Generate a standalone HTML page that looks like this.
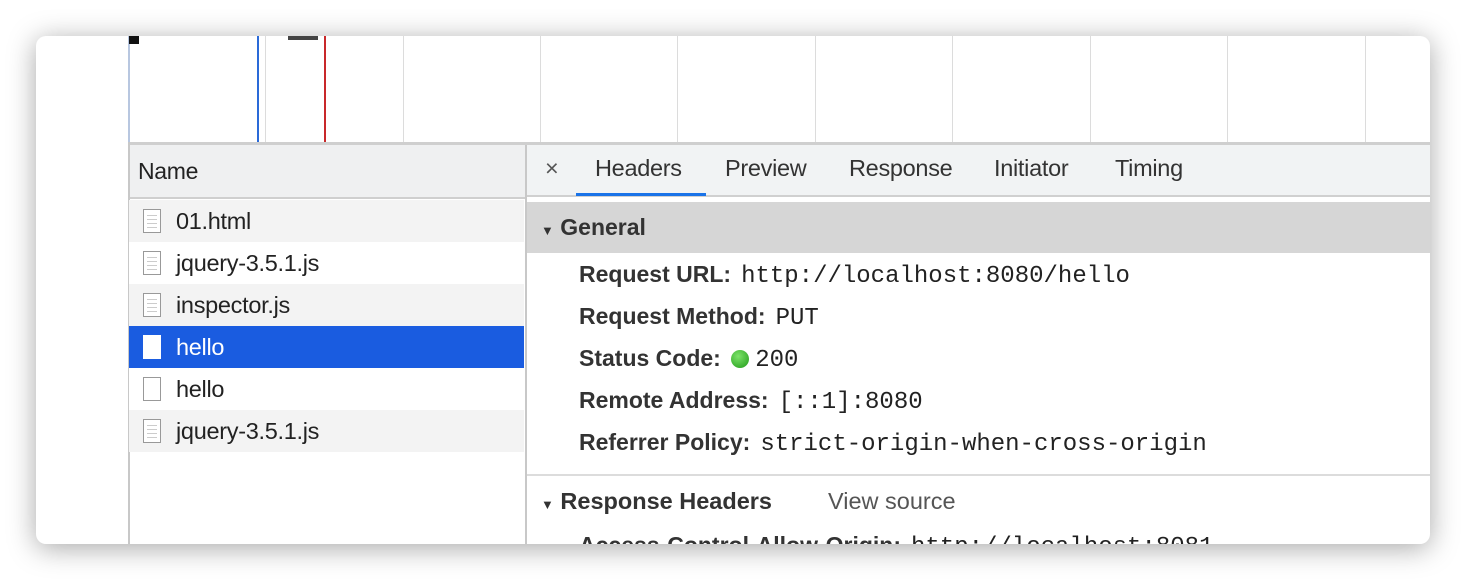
<!DOCTYPE html><html><head><style>
body{margin:0;width:1466px;height:580px;background:#fff;position:relative;overflow:hidden;font-family:"Liberation Sans",sans-serif;color:#222}
.win{position:absolute;left:36px;top:36px;width:1394px;height:508px;border-radius:10px;background:#fff;box-shadow:0 4px 28px rgba(0,0,0,.35);overflow:hidden}
.a{position:absolute}
.vl{position:absolute;top:0;height:106px;width:1px;background:#dcdcdc}
.row{position:absolute;left:93px;width:395px;height:42px;font-size:23.5px;line-height:42px;letter-spacing:-0.3px}
.ic{position:absolute;left:14px;top:9px;width:18px;height:24px;border:1.5px solid #999;background:#fff;box-sizing:border-box}
.ic i{position:absolute;left:3px;right:3px;height:1px;background:#ccc}
.row span{position:absolute;left:47px}
.k{position:absolute;left:543px;font-size:23px;font-weight:bold;color:#333;letter-spacing:0;white-space:nowrap}
.v{font-family:"Liberation Mono",monospace;font-weight:normal;color:#222;font-size:24px;margin-left:10px;letter-spacing:0}
.tab{position:absolute;top:119px;font-size:23.5px;color:#333;letter-spacing:-0.3px}
</style></head><body>
<div class="win">
<div class="a" style="left:92px;top:0;width:2px;height:106px;background:#b8c7e0"></div>
<div class="a" style="left:93px;top:0;width:10px;height:8px;background:#111"></div>
<div class="a" style="left:252px;top:0;width:30px;height:4px;background:#444"></div>
<div class="vl" style="left:229px"></div><div class="vl" style="left:367px"></div><div class="vl" style="left:504px"></div><div class="vl" style="left:641px"></div><div class="vl" style="left:779px"></div><div class="vl" style="left:916px"></div><div class="vl" style="left:1054px"></div><div class="vl" style="left:1191px"></div><div class="vl" style="left:1329px"></div>
<div class="a" style="left:221px;top:0;width:2px;height:106px;background:#2a6ad8"></div>
<div class="a" style="left:288px;top:0;width:2px;height:106px;background:#c8282a"></div>
<div class="a" style="left:92px;top:106px;width:1302px;height:3px;background:#cfcfcf"></div>
<div class="a" style="left:92px;top:106px;width:2px;height:402px;background:#c8c8c8"></div>
<div class="a" style="left:94px;top:109px;width:395px;height:52px;background:#eff0f1;font-size:23px;line-height:52px;letter-spacing:-0.3px"><span style="margin-left:8px">Name</span></div>
<div class="a" style="left:94px;top:161px;width:395px;height:2px;background:#cfcfcf"></div>
<div class="a" style="left:489px;top:109px;width:2px;height:399px;background:#c8c8c8"></div>
<div class="row" style="top:164px;background:#f3f3f3"><div class="ic"><i style="top:5px"></i><i style="top:9px"></i><i style="top:13px"></i><i style="top:17px"></i></div><span>01.html</span></div>
<div class="row" style="top:206px;background:#fff"><div class="ic"><i style="top:5px"></i><i style="top:9px"></i><i style="top:13px"></i><i style="top:17px"></i></div><span>jquery-3.5.1.js</span></div>
<div class="row" style="top:248px;background:#f3f3f3"><div class="ic"><i style="top:5px"></i><i style="top:9px"></i><i style="top:13px"></i><i style="top:17px"></i></div><span>inspector.js</span></div>
<div class="row" style="top:290px;background:#1a5ce0;color:#fff"><div class="ic" style="border-color:#fff"></div><span>hello</span></div>
<div class="row" style="top:332px;background:#fff"><div class="ic"></div><span>hello</span></div>
<div class="row" style="top:374px;background:#f3f3f3"><div class="ic"><i style="top:5px"></i><i style="top:9px"></i><i style="top:13px"></i><i style="top:17px"></i></div><span>jquery-3.5.1.js</span></div>
<div class="a" style="left:491px;top:109px;width:903px;height:50px;background:#f1f3f4"></div>
<div class="a" style="left:491px;top:159px;width:903px;height:2px;background:#d0d0d0"></div>
<div class="tab" style="left:509px;color:#555">×</div>
<div class="tab" style="left:559px">Headers</div>
<div class="a" style="left:540px;top:157px;width:130px;height:3px;background:#1a73e8"></div>
<div class="tab" style="left:689px">Preview</div>
<div class="tab" style="left:813px">Response</div>
<div class="tab" style="left:958px">Initiator</div>
<div class="tab" style="left:1079px">Timing</div>
<div class="a" style="left:491px;top:166px;width:903px;height:51px;background:#d6d6d6;font-size:23px;font-weight:bold;line-height:51px;color:#333"><span style="font-size:13px;margin-left:14px">▼</span> General</div>
<div class="k" style="top:225px">Request URL:<span class="v">http://localhost:8080/hello</span></div>
<div class="k" style="top:267px">Request Method:<span class="v">PUT</span></div>
<div class="k" style="top:309px">Status Code: <span style="display:inline-block;width:18px;height:18px;border-radius:50%;background:radial-gradient(circle at 40% 35%,#7de36a,#1f9a18);vertical-align:-2px;margin-left:4px"></span><span class="v" style="margin-left:6px">200</span></div>
<div class="k" style="top:351px">Remote Address:<span class="v">[::1]:8080</span></div>
<div class="k" style="top:393px">Referrer Policy:<span class="v">strict-origin-when-cross-origin</span></div>
<div class="a" style="left:491px;top:438px;width:903px;height:2px;background:#dcdcdc"></div>
<div class="a" style="left:505px;top:452px;font-size:23.5px;font-weight:bold;color:#333;white-space:nowrap"><span style="font-size:13px">▼</span> Response Headers<span style="font-weight:normal;color:#555;margin-left:56px">View source</span></div>
<div class="k" style="top:496px">Access-Control-Allow-Origin:<span class="v">http://localhost:8081</span></div>
</div>
</body></html>
